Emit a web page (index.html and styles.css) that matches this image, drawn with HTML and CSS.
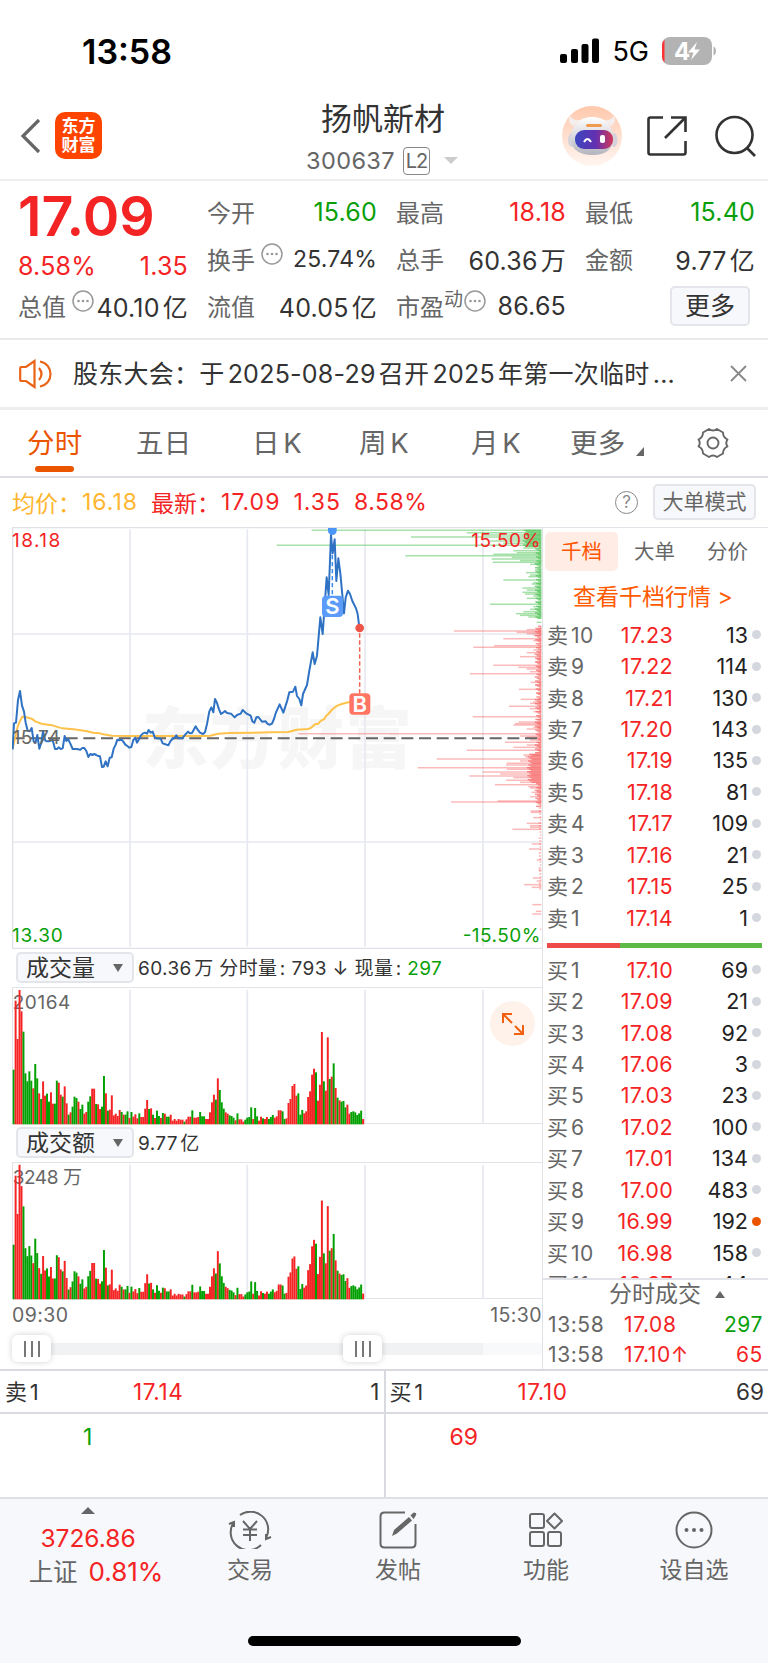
FILE: index.html
```
<!DOCTYPE html>
<html lang="zh-CN">
<head>
    <meta charset="UTF-8">
    <meta name="viewport" content="width=device-width, initial-scale=1.0">
    <title>扬帆新材 300637</title>
    <link rel="stylesheet" href="styles.css">
</head>
<body>
    <div class="status-bar">
        <span class="clock">13:58</span>
        <svg class="signal" width="40" height="26" viewBox="0 0 40 26">
            <rect x="0" y="16" width="7" height="9" rx="2"/>
            <rect x="11" y="11" width="7" height="14" rx="2"/>
            <rect x="21.500" y="6" width="7" height="19" rx="2"/>
            <rect x="32" y="0.500" width="7" height="24.500" rx="2"/>
        </svg>
        <span class="network">5G</span>
        <svg class="battery" width="54" height="28" viewBox="0 0 54 28">
            <rect x="0" y="0" width="50" height="28" rx="8" fill="#b3b3b3"/>
            <path d="M2.500 2.500Q0 5 0 8v12q0 3 2.500 5.500z" fill="#f33"/>
            <path d="M51.500 9.500q2.500 1 2.500 4.500t-2.500 4.500z" fill="#b3b3b3"/>
            <text x="12" y="22.500" class="battery-text">4</text>
            <path d="M35 5L26 15.500h5.500L29 23l9-10.500h-5.500z" fill="#fff"/>
        </svg>
    </div>

    <div class="header">
        <div class="header-left">
            <svg width="21" height="36" viewBox="0 0 21 36"><path d="M19 2L3 18l16 16" fill="none" stroke="#666" stroke-width="3.200"/></svg>
            <div class="logo"><span>东方</span><span>财富</span></div>
        </div>
        <div class="header-title">
            <div class="stock-name">扬帆新材</div>
            <div class="stock-code"><span>300637</span><span class="level">L2</span><i class="caret"></i></div>
        </div>
        <div class="header-right">
            <svg class="robot" width="60" height="60" viewBox="0 0 60 60">
                <defs>
                    <linearGradient id="halo" x1="0" y1="0" x2="0" y2="1"><stop offset="0" stop-color="#ffc8ac"/><stop offset="1" stop-color="#fff6f1"/></linearGradient>
                    <linearGradient id="shell" x1="0" y1="0" x2="0" y2="1"><stop offset="0" stop-color="#fff"/><stop offset="1" stop-color="#b4b4bf"/></linearGradient>
                    <linearGradient id="visor" x1="0" y1="0" x2="1" y2="0"><stop offset="0" stop-color="#3c46c0"/><stop offset=".55" stop-color="#6330b0"/><stop offset="1" stop-color="#d23858"/></linearGradient>
                </defs>
                <circle cx="30" cy="30" r="30" fill="url(#halo)"/>
                <path d="M11 20Q5 16 8 10Q11 15 18 14z M49 20Q55 16 52 10Q49 15 42 14z" fill="#f4eeee"/>
                <ellipse cx="10" cy="34" rx="4" ry="7" fill="#d5d2db"/>
                <ellipse cx="52" cy="34" rx="3.500" ry="7" fill="#d5d2db"/>
                <path d="M30 11C44 11 51 20 51 32C51 44 43 49 31 49C18 49 9 44 9 32C9 20 17 11 30 11z" fill="url(#shell)"/>
                <rect x="13" y="24" width="38" height="19" rx="9" fill="url(#visor)"/>
                <path d="M22 36q3.500-6 7 0" fill="none" stroke="#fff" stroke-width="2"/>
                <rect x="38" y="29" width="5" height="8" rx="2" fill="#fff"/>
                <rect x="24" y="18" width="16" height="3" rx="1.500" fill="#f09a4d"/>
            </svg>
            <svg width="40" height="40" viewBox="0 0 40 40"><path d="M16 1.500H3.500q-2 0-2 2v33q0 2 2 2h33q2 0 2-2V25M24 1.500h14.500V16M38 2L18 22" fill="none" stroke="#333" stroke-width="2.600"/></svg>
            <svg width="42" height="42" viewBox="0 0 42 42"><g fill="none" stroke="#333" stroke-width="2.600"><circle cx="19.500" cy="20" r="18"/><path d="M32 33l8 8"/></g></svg>
        </div>
    </div>

    <div class="quote">
        <div class="quote-col first">
            <div class="price">17.09</div>
            <div class="cell change"><span>8.58%</span><span>1.35</span></div>
            <div class="cell"><label>总值</label><svg class="info"><use href="#dots"/></svg><b>40.10亿</b></div>
        </div>
        <div class="quote-col">
            <div class="cell"><label>今开</label><b class="down">15.60</b></div>
            <div class="cell"><label>换手</label><svg class="info"><use href="#dots"/></svg><b class="small">25.74%</b></div>
            <div class="cell"><label>流值</label><b>40.05亿</b></div>
        </div>
        <div class="quote-col">
            <div class="cell"><label>最高</label><b class="up">18.18</b></div>
            <div class="cell"><label>总手</label><b>60.36万</b></div>
            <div class="cell"><label>市盈<sup>动</sup></label><svg class="info tight"><use href="#dots"/></svg><b>86.65</b></div>
        </div>
        <div class="quote-col">
            <div class="cell"><label>最低</label><b class="down">15.40</b></div>
            <div class="cell"><label>金额</label><b>9.77亿</b></div>
            <div class="cell"><button class="more-btn">更多</button></div>
        </div>
    </div>

    <div class="notice">
        <svg width="34" height="30" viewBox="0 0 34 30"><g fill="none" stroke="#eb6316" stroke-width="2.200"><path d="M2 8h5L15.500 2v26L7 22H2Q1.200 22 1.200 20V10Q1.200 8 2 8z"/><path d="M20 9q5 6 0 12M21 2.500C35 5 35 25 21 27.500"/></g></svg>
        <span class="notice-text">股东大会：于2025-08-29召开2025年第一次临时...</span>
        <svg width="17" height="17" viewBox="0 0 17 17"><path d="M1 1l15 15M16 1L1 16" stroke="#888" stroke-width="1.800"/></svg>
    </div>

    <div class="tabs">
        <span class="tab active">分时</span>
        <span class="tab">五日</span>
        <span class="tab">日K</span>
        <span class="tab">周K</span>
        <span class="tab">月K</span>
        <span class="tab">更多<i class="corner"></i></span>
        <svg class="gear" width="32" height="32" viewBox="0 0 32 32"><g fill="none" stroke="#666" stroke-width="1.900"><path d="M12 2Q16 5 20 2L26 5.500Q26 10.500 30.500 12.500Q28 16 30.500 19.500Q26 21.500 26 26.500L20 30Q16 27 12 30L6 26.500Q6 21.500 1.500 19.500Q4 16 1.500 12.500Q6 10.500 6 5.500z" stroke-linejoin="round"/><circle cx="16" cy="16" r="5.500"/></g></svg>
    </div>

    <div class="summary">
        <span class="avg">均价：</span><span class="avg n1">16.18</span>
        <span class="up">最新：</span><span class="up n2">17.09</span><span class="up n3">1.35</span><span class="up n4">8.58%</span>
        <span class="help">?</span>
        <button class="mode-btn">大单模式</button>
    </div>

    <div class="main">
        <div class="charts">
            <svg class="trend" viewBox="36 21 1590 1266">
                <text class="watermark" x="426" y="728" textLength="810">东方财富</text>
                <path class="grid" d="M390 28V1280M742 28V1280M1095 28V1280M1449 28V1280M38 342H1626M38 966H1626"/>
                <path class="frame" d="M1626 23H38V1285H1626"/>
                <g id="depth"></g>
                <path class="base" d="M38 655H1618"/>
                <polyline class="avg-line" points="38,685 46,650 53,620 60,603 67,590 76,591 95,596 107,605 127,612 157,616 187,625 220,628 258,633 280,638 300,640 310,643 335,647 400,648 500,648 610,648 630,647 655,641 690,639 760,638 810,637 865,636 890,629 925,627 935,622 945,613 955,611 963,602 973,597 978,588 985,582 998,567 1012,557 1025,552 1045,547 1080,542"/>
                <polyline class="price-line" points="38,688 42,610 48,608 54,540 60,513 66,557 72,575 77,608 83,632 89,634 95,624 101,665 107,667 112,645 118,686 124,668 129,634 136,662 141,664 147,664 153,662 158,660 165,687 171,687 176,682 182,687 188,685 194,648 199,663 205,658 212,673 218,687 230,687 241,689 247,684 253,684 259,693 265,711 271,702 277,705 283,702 289,705 294,708 300,709 306,741 311,740 317,724 323,739 329,713 335,712 341,686 347,674 352,659 359,661 365,659 370,665 376,674 382,678 388,683 394,681 400,660 406,653 411,668 417,658 423,646 429,640 435,638 441,641 446,630 452,638 458,635 464,652 470,655 482,656 488,670 494,672 505,676 511,664 517,657 523,654 529,646 535,655 547,655 553,647 564,635 570,640 576,639 587,619 593,629 600,638 609,642 615,637 621,612 628,574 634,562 640,577 645,537 651,549 657,568 663,582 669,578 675,573 681,579 693,581 704,592 711,585 722,581 728,570 740,581 752,587 757,604 763,608 769,592 775,591 786,605 797,604 803,612 810,614 816,611 822,597 828,577 839,553 850,578 862,541 868,517 879,515 886,500 891,528 898,537 904,556 909,522 921,495 928,452 938,397 944,432 951,407 961,292 968,342 980,172 986,225 993,45 998,100 1004,58 1009,183 1015,115 1021,160 1027,225 1032,280 1037,233 1044,212 1050,222 1057,243 1068,265 1073,282 1078,322"/>
                <path d="M997 105V240" stroke="#3b8bf5" stroke-width="4.500" stroke-dasharray="13 8"/>
                <path d="M1079 340V520" stroke="#f0604f" stroke-width="4.500" stroke-dasharray="13 8"/>
                <path d="M984 24h26v8a13 13 0 0 1-26 0z" fill="#4b94f8"/>
                <circle cx="1079" cy="324" r="13" fill="#ef5448"/>
                <rect x="966" y="227" width="63" height="64" rx="12" fill="#5b9cfb"/>
                <rect x="1048" y="520" width="63" height="64" rx="12" fill="#ff7563"/>
                <text class="flag" x="997" y="282">S</text>
                <text class="flag" x="1079" y="575">B</text>
                <text class="axis up" x="36" y="81" textLength="145">18.18</text>
                <text class="axis" x="38" y="672" textLength="143">15.74</text>
                <text class="axis down" x="36" y="1265" textLength="152">13.30</text>
                <text class="axis up" x="1414" y="81" textLength="207">15.50%</text>
                <text class="axis down" x="1388" y="1265" textLength="233">-15.50%</text>
            </svg>
            <div class="sub-head">
                <button class="select">成交量<i></i></button>
                <span>60.36万 分时量: 793 ↓ 现量: <em class="down">297</em></span>
            </div>
            <div class="sub-chart">
                <svg viewBox="36 126 1590 414">
                    <path class="grid" d="M390 134V538M742 134V538M1095 134V538M1449 134V538"/>
                    <text class="axis" x="38" y="192" textLength="173">20164</text>
                    <g id="volume"></g>
                </svg>
                <span class="expand"><svg width="22" height="22" viewBox="0 0 22 22"><path d="M10 1H1v9M1 1l9 9M12 21h9v-9M21 21l-8-8" fill="none" stroke="#f06010" stroke-width="2"/></svg></span>
            </div>
            <div class="sub-head">
                <button class="select">成交额<i></i></button>
                <span>9.77亿</span>
            </div>
            <div class="sub-chart">
                <svg viewBox="36 126 1590 414">
                    <path class="grid" d="M390 134V538M742 134V538M1095 134V538M1449 134V538"/>
                    <text class="axis" x="38" y="192" textLength="208">3248 万</text>
                    <g id="amount"></g>
                </svg>
            </div>
            <div class="times"><span>09:30</span><span>15:30</span></div>
            <div class="slider">
                <span class="handle start"><i></i><i></i><i></i></span>
                <span class="handle end"><i></i><i></i><i></i></span>
            </div>
        </div>

        <div class="book">
            <div class="book-tabs"><span class="active">千档</span><span>大单</span><span>分价</span></div>
            <div class="book-link">查看千档行情 &gt;</div>
            <div class="levels" id="sell"></div>
            <div class="ratio"></div>
            <div class="levels buy" id="buy"></div>
            <div class="deals">
                <div class="deals-title">分时成交<i></i></div>
                <div class="deal"><span>13:58</span><span class="up">17.08</span><span class="down">297</span></div>
                <div class="deal"><span>13:58</span><span class="up">17.10↑</span><span class="up">65</span></div>
            </div>
        </div>
    </div>

    <div class="queue">
        <div class="side">
            <div class="side-head"><span>卖1</span><span class="up">17.14</span><span>1</span></div>
            <div class="side-body down">1</div>
        </div>
        <div class="side">
            <div class="side-head"><span>买1</span><span class="up">17.10</span><span>69</span></div>
            <div class="side-body up">69</div>
        </div>
    </div>

    <div class="bottom">
        <div class="nav">
            <div class="index">
                <i></i>
                <span class="up">3726.86</span>
                <span>上证 <em class="up">0.81%</em></span>
            </div>
            <div class="nav-item">
                <svg width="44" height="38" viewBox="0 0 44 38"><g fill="none" stroke="#666" stroke-width="2"><path d="M12 4A17.800 17.800 0 0 1 38 27M33 34A17.800 17.800 0 0 1 6 11M1 13l5-2v5M43 26l-5 2v-5M15 10l7 8 7-8M22 18v12M15 18.500h14M15 24h14"/></g></svg>
                <span>交易</span>
            </div>
            <div class="nav-item">
                <svg width="38" height="38" viewBox="0 0 38 38"><path d="M26 1.500H5.500q-4 0-4 4v27q0 4 4 4h27q4 0 4-4V13" fill="none" stroke="#666" stroke-width="2"/><path d="M13 25l2-6L30 6l3 3.500L18 22.500zM31.500 4.500L34 2q1-1 2.500 0t0 3L34.500 8z" fill="#666"/></svg>
                <span>发帖</span>
            </div>
            <div class="nav-item">
                <svg width="36" height="38" viewBox="0 0 36 38"><g fill="none" stroke="#666" stroke-width="2"><rect x="2" y="3" width="14" height="14" rx="2"/><path d="M26.500 2.500L34 10l-7.500 7.500L19 10z" stroke-linejoin="round"/><rect x="2" y="21" width="14" height="14" rx="2"/><rect x="20" y="21" width="13" height="14" rx="2"/></g></svg>
                <span>功能</span>
            </div>
            <div class="nav-item">
                <svg width="38" height="38" viewBox="0 0 38 38"><circle cx="19" cy="19" r="17.500" fill="none" stroke="#666" stroke-width="2"/><g fill="#666"><circle cx="11.500" cy="19" r="2"/><circle cx="19" cy="19" r="2"/><circle cx="26.500" cy="19" r="2"/></g></svg>
                <span>设自选</span>
            </div>
        </div>
        <div class="home-bar"></div>
    </div>

    <svg class="defs">
        <symbol id="dots" viewBox="0 0 22 22"><circle cx="11" cy="11" r="10" fill="none" stroke="#999" stroke-width="1.500"/><g fill="#999"><circle cx="6.500" cy="11" r="1.300"/><circle cx="11" cy="11" r="1.300"/><circle cx="15.500" cy="11" r="1.300"/></g></symbol>
    </svg>
    <script src="script.js"></script>
</body>
</html>
```
FILE: styles.css
```
body {
    margin: 0;
    width: 768px;
    background: #fff;
    color: #333;
    font-family: Inter, "Noto Sans CJK SC", sans-serif;
    font-size: 24px;
    text-autospace: normal;
}
button {
    font-family: inherit;
    padding: 0;
    background: #f7f8fb;
    border: 2px solid #e3e5ea;
    border-radius: 5px;
    box-sizing: border-box;
}
svg {
    flex: none;
}
b, em, i {
    font-weight: normal;
    font-style: normal;
}
.up {
    color: #f42424;
    fill: #f42424;
}
.down {
    color: #0a9f0a;
    fill: #0a9f0a;
}
.defs {
    display: none;
}

/* status bar */
.status-bar {
    height: 102px;
    box-sizing: border-box;
    padding: 0 52px 0 82px;
    display: flex;
    align-items: center;
    color: #000;
}
.clock {
    font-size: 34px;
    font-weight: 600;
    margin-right: auto;
}
.network {
    font-size: 27px;
    margin: 0 13px 0 12px;
}
.battery-text {
    font-size: 24px;
    font-weight: 700;
    fill: #fff;
}

/* header */
.header {
    height: 77px;
    display: grid;
    grid-template-columns: 1fr 1fr 1fr;
    border-bottom: 2px solid #eee;
    box-sizing: content-box;
}
.header-left {
    display: flex;
    align-items: center;
    gap: 14px;
    padding: 0 0 10px 20px;
}
.logo {
    width: 47px;
    height: 47px;
    border-radius: 10px;
    background: #ff4400;
    color: #fff;
    font-size: 17px;
    line-height: 19px;
    font-weight: 700;
    display: flex;
    flex-direction: column;
    align-items: center;
    justify-content: center;
}
.header-title {
    text-align: center;
}
.stock-name {
    font-size: 31px;
    line-height: 34px;
    margin-right: 2px;
}
.stock-code {
    display: flex;
    align-items: center;
    justify-content: center;
    color: #666;
    font-size: 23.5px;
    letter-spacing: 0.4px;
    margin: 9px 4px 0 0;
    height: 31px;
}
.level {
    font-size: 20px;
    line-height: 26px;
    width: 25px;
    text-align: center;
    border: 1.5px solid #888;
    border-radius: 4px;
    letter-spacing: -1px;
    margin: 0 14px 0 8px;
}
.caret {
    border: 7px solid transparent;
    border-top: 7px solid #ccc;
    border-bottom: 0;
}
.header-right {
    display: flex;
    align-items: center;
    justify-content: flex-end;
    padding: 0 11px 9px 0;
}
.robot {
    margin-right: 25px;
}
.header-right svg:last-child {
    margin-left: 28px;
}

/* quote */
.quote {
    display: grid;
    grid-template-columns: 170px 170px 170px 170px;
    gap: 19px;
    padding: 7px 0 9px 18px;
    border-bottom: 2px solid #eaeaea;
}
.cell {
    height: 47px;
    display: flex;
    align-items: center;
}
.cell label {
    color: #666;
    white-space: nowrap;
}
.cell b {
    margin-left: auto;
    font-size: 25px;
    letter-spacing: 0.2px;
    white-space: nowrap;
}
.cell b.small {
    font-size: 23px;
}
.price {
    height: 47px;
    line-height: 56px;
    font-size: 55.5px;
    font-weight: 600;
    color: #f42424;
}
.change {
    justify-content: space-between;
    color: #f42424;
    font-size: 25px;
    letter-spacing: 0.2px;
    box-sizing: border-box;
    padding-top: 15px;
}
.info {
    width: 22px;
    height: 22px;
    margin: 0 -20px 9px 6px;
}
.info.tight {
    margin-left: 1px;
}
.cell sup {
    font-size: 19px;
    line-height: 0;
    vertical-align: 10px;
}
.more-btn {
    width: 80px;
    height: 40px;
    margin: 0 5px 0 auto;
    font-size: 25px;
    line-height: 34px;
    color: #333;
}

/* notice */
.notice {
    height: 67px;
    display: flex;
    align-items: center;
    padding: 0 21px 0 19px;
    border-bottom: 3px solid #eee;
}
.notice-text {
    font-size: 25px;
    letter-spacing: 0.25px;
    margin: 0 auto 4px 20px;
    white-space: nowrap;
}

/* tabs */
.tabs {
    height: 66px;
    display: grid;
    grid-template-columns: 109px 116px 107px 112px 99px 127px 32px;
    align-items: center;
    padding-left: 27px;
    border-bottom: 2px solid #dedfe5;
    font-size: 27.5px;
    letter-spacing: 0.3px;
    color: #666;
}
.tab {
    position: relative;
    line-height: 66px;
}
.tab.active {
    color: #eb5500;
}
.tab.active::after {
    content: "";
    position: absolute;
    left: 8px;
    bottom: 4px;
    width: 39px;
    height: 6px;
    border-radius: 3px;
    background: #eb5500;
}
.corner {
    display: inline-block;
    border-left: 8px solid transparent;
    border-bottom: 9px solid #666;
    margin: 0 0 -3px 10px;
}

/* summary line */
.summary {
    height: 49px;
    box-sizing: border-box;
    padding: 0 12px 1px;
    display: flex;
    align-items: center;
    font-size: 23px;
    white-space: nowrap;
}
.avg {
    color: #ffb62e;
}
.n1, .n2, .n3, .n4 {
    letter-spacing: 1px;
    margin-left: 1px;
}
.n1 {
    margin-right: 13px;
}
.n3, .n4 {
    margin-left: 13px;
}
.n4 {
    letter-spacing: 0.5px;
}
.help {
    width: 21px;
    height: 21px;
    line-height: 21px;
    margin-left: auto;
    border: 1.5px solid #888;
    border-radius: 50%;
    text-align: center;
    font-size: 17px;
    color: #888;
}
.mode-btn {
    width: 103px;
    height: 36px;
    margin-left: 15px;
    font-size: 21px;
    line-height: 30px;
    color: #666;
}

/* charts */
.main {
    display: flex;
    height: 842px;
    margin-left: 12px;
}
.charts {
    width: 531px;
    flex: none;
    border-right: 1px solid #dfe1e7;
    box-sizing: border-box;
}
.trend {
    display: block;
    width: 530px;
    height: 422px;
}
.grid {
    fill: none;
    stroke: #e6e9f0;
    stroke-width: 5;
}
.frame {
    fill: none;
    stroke: #dfe1e7;
    stroke-width: 4;
}
.base {
    stroke: #666;
    stroke-width: 6;
    stroke-dasharray: 36 17;
}
.avg-line, .price-line {
    fill: none;
    stroke: #ffc24b;
    stroke-width: 6;
    stroke-linejoin: round;
}
.price-line {
    stroke: #2f72c4;
}
.watermark {
    font-size: 200px;
    font-weight: 900;
    fill: #f6f6f6;
}
.flag {
    font-size: 66px;
    font-weight: 600;
    fill: #fff;
    text-anchor: middle;
}
.axis {
    font-size: 57px;
    fill: #666;
}
.axis.up {
    fill: #f42424;
}
.axis.down {
    fill: #0a9f0a;
}
.sub-head {
    height: 38px;
    box-sizing: border-box;
    display: flex;
    align-items: center;
    padding: 0 0 1px 4px;
    font-size: 19px;
    letter-spacing: 0.4px;
    white-space: pre;
}
.sub-head > span {
    margin-bottom: 2px;
}
.select {
    width: 118px;
    height: 31px;
    margin-right: 4px;
    display: flex;
    align-items: center;
    justify-content: space-between;
    padding: 0 9px 0 8px;
    font-size: 23px;
    line-height: 26px;
    color: #333;
}
.select i {
    border: 5px solid transparent;
    border-top: 8px solid #666;
    border-bottom: 0;
}
.sub-chart {
    position: relative;
    height: 137px;
    box-sizing: border-box;
    border: 1px solid #e1e3e9;
    border-right: 0;
}
.sub-chart > svg {
    display: block;
    width: 530px;
    height: 138px;
    margin: -1px;
}
.expand {
    position: absolute;
    right: 7px;
    top: 13px;
    width: 45px;
    height: 45px;
    border-radius: 50%;
    background: #fff2eb;
    display: flex;
    align-items: center;
    justify-content: center;
}
.times {
    height: 31px;
    display: flex;
    align-items: center;
    justify-content: space-between;
    font-size: 19.5px;
    letter-spacing: 0.4px;
    color: #666;
}
.slider {
    position: relative;
    height: 12px;
    margin-top: 13px;
    border-radius: 4px;
    background: linear-gradient(90deg, #f1f2f4 471px, #f8f9fb 471px);
}
.handle {
    position: absolute;
    top: -8px;
    width: 39px;
    height: 27px;
    border-radius: 6px;
    background: #fff;
    box-shadow: 0 0 6px rgba(0,0,0,0.18);
    display: flex;
    align-items: center;
    justify-content: center;
    gap: 5px;
}
.handle i {
    width: 2px;
    height: 16px;
    background: #777;
}
.handle.start {
    left: 0;
}
.handle.end {
    left: 331px;
}

/* order book */
.book {
    width: 225px;
    display: flex;
    flex-direction: column;
    border-top: 1px solid #e1e3e9;
    box-sizing: border-box;
}
.book-tabs {
    display: flex;
    padding: 4px 0 0 2px;
    font-size: 20.5px;
    color: #666;
    flex: none;
}
.book-tabs span {
    width: 73px;
    line-height: 39px;
    text-align: center;
    border-radius: 5px;
}
.book-tabs .active {
    background: #ffede5;
    color: #ff5500;
}
.book-link {
    height: 48px;
    line-height: 52px;
    flex: none;
    font-size: 23px;
    color: #ff5a00;
    padding-left: 30px;
}
.levels {
    flex: none;
    height: 315px;
}
.level-row {
    height: 31.45px;
    display: flex;
    align-items: center;
    padding-left: 4px;
    font-size: 21.5px;
    color: #666;
}
.level-row span:nth-child(1) {
    width: 52px;
    white-space: nowrap;
    font-size: 21px;
    letter-spacing: 0.4px;
    margin-bottom: 2px;
}
.level-row span:nth-child(2) {
    width: 74px;
    text-align: right;
    letter-spacing: 0.3px;
}
.level-row span:nth-child(3) {
    width: 75px;
    text-align: right;
    color: #222;
}
.level-row i {
    width: 9px;
    height: 9px;
    margin-left: 4px;
    border-radius: 50%;
    background: #d4d7de;
}
.level-row i.mine {
    background: #eb5500;
}
.ratio {
    flex: none;
    width: 215px;
    height: 5px;
    margin: 9px 0 6px 4px;
    background: linear-gradient(90deg, #ef4a4a 73px, #5cba47 73px);
}
.levels.buy {
    height: 324px;
    overflow: hidden;
}
.deals {
    flex: 1;
    border-top: 2px solid #e1e3e9;
    color: #666;
}
.deals-title {
    height: 30px;
    line-height: 28px;
    font-size: 23px;
    padding-left: 66px;
}
.deals-title i {
    display: inline-block;
    border: 5px solid transparent;
    border-bottom: 7px solid #666;
    border-top: 0;
    margin: 0 0 4px 14px;
}
.deal {
    height: 29.5px;
    display: flex;
    align-items: center;
    padding: 0 5px 0 5px;
    font-size: 21px;
    letter-spacing: 0.6px;
}
.deal span:nth-child(1) {
    width: 76px;
}
.deal span:nth-child(3) {
    margin-left: auto;
}

/* best bid / ask */
.queue {
    display: flex;
    border-top: 2px solid #d9dae0;
    border-bottom: 2px solid #dedfe3;
    height: 126px;
}
.side {
    flex: 1;
}
.side:first-child {
    border-right: 2px solid #d9dae0;
    margin-right: -1px;
}
.side-head {
    height: 41px;
    display: grid;
    grid-template-columns: 128px 1fr auto;
    align-items: center;
    padding: 0 4px 0 5px;
    border-bottom: 2px solid #d9dae0;
    font-size: 22.5px;
}
.side-head span:first-child {
    font-size: 22px;
    margin-bottom: 3px;
}
.side-head .up {
    letter-spacing: 0.6px;
}
.side-body {
    padding: 9px 0 0 83px;
    font-size: 23px;
}
.side + .side .side-body {
    padding-left: 65px;
}

/* bottom nav */
.bottom {
    height: 164px;
    background: #f7f8fb;
    color: #666;
    overflow: hidden;
}
.nav {
    display: grid;
    grid-template-columns: 176px 148px 148px 148px 148px;
    height: 137px;
}
.index, .nav-item {
    display: flex;
    flex-direction: column;
    align-items: center;
    font-size: 23px;
}
.index i {
    border: 7px solid transparent;
    border-bottom: 7px solid #666;
    border-top: 0;
    margin: 8px 0 7px;
}
.index span {
    height: 34px;
    line-height: 34px;
    font-size: 24.5px;
    white-space: pre;
    padding-left: 16px;
}
.index span:nth-child(2) {
    padding-left: 0;
}
.index em {
    font-size: 26px;
    margin-left: 4px;
}
.nav-item svg {
    margin: 12px 0 4px;
}
.nav-item span {
    line-height: 34px;
}
.home-bar {
    width: 273px;
    height: 10px;
    border-radius: 5px;
    background: #000;
    margin: 0 auto;
}
```
FILE: script.js
```
const RED = "#f42424";
const GREEN = "#00a000";

// one entry per minute from 09:30, bar height + direction
const minutes = `164g 371r 256r 403r 339r 278g 153g 129g 159g 131g 108r 181g 138g 93r 76g 129r 86r 92g 68g 96r
62r 62g 131g 125r 89r 83g 114r 63r 29g 36r 53g 83g 79g 68r 46g 59g 32r 37r 68g 84g
107r 107r 61g 60r 46r 53g 145g 93r 41g 44r 87r 27r 32r 25r 43r 37g 29r 29g 39g 19r
37g 23r 30r 18r 33g 22r 22r 47r 73r 46g 48r 29g 19r 41g 25g 19r 34g 32r 23g 23g
29r 11r 16r 11r 16r 14r 14r 8g 15r 23r 23r 42g 20r 20r 22r 37g 24g 24g 16r 16r
36r 66r 89r 74g 138r 103g 66g 47g 36r 32r 27g 25g 20g 12r 33g 15r 15r 8r 14g 20g
22g 51g 16r 49g 24g 11r 23r 18g 16r 22r 16g 22g 28g 20r 24r 42r 42r 39g 16g 18r
64r 76r 115r 121r 86r 93g 29g 43g 33r 39r 82r 99r 149r 167r 156g 71r 119r 277r 129g 101r
261r 136g 143r 183g 109r 80g 72r 68g 70g 51g 59r 32r 37g 39g 36g 28g 33g 41g 16r`.split(/\s+/);

function drawBars(id, growth) {
    let out = "";
    minutes.forEach((m, i) => {
        const h = parseInt(m) * (1 + growth * i / minutes.length);
        const x = 38 + i * 5.89;
        out += `<rect x="${x}" y="${538 - h}" width="5.9" height="${h}" fill="${m.endsWith("g") ? GREEN : RED}"/>`;
    });
    document.getElementById(id).innerHTML = out;
}

// price distribution on the right edge of the chart: [y, left]
const greenDepth = [[31,125],[38,590],[45,640],[51,423],[57,700],[63,660],[70,700],[76,20],[84,760],[92,730],[98,740],[103,670],[107,406],[112,725],[117,665],[122,750],[127,668],[133,780],[150,795],[158,768],[165,780],[170,775],[180,700],[188,790],[192,785],[204,757],[210,770],[217,757],[222,765],[228,790],[235,770],[246,795],[253,660],[260,790],[268,780],[275,760],[281,738],[286,750],[291,775],[307,800]];
const redDepth = [[325,795],[329,770],[333,552],[337,740],[341,770],[346,790],[356,700],[362,790],[377,672],[382,610],[390,790],[398,770],[410,750],[417,800],[425,795],[436,670],[442,745],[447,770],[455,780],[461,600],[487,782],[495,795],[508,747],[520,800],[538,752],[546,790],[550,780],[559,717],[566,780],[575,790],[590,608],[598,795],[606,745],[611,735],[615,730],[622,790],[627,770],[641,85],[648,750],[652,770],[660,780],[667,705],[675,770],[682,730],[691,590],[698,795],[705,760],[710,765],[717,500],[723,750],[730,710],[735,708],[743,443],[748,710],[756,638],[762,690],[768,598],[773,730],[781,708],[787,750],[794,675],[800,775],[804,780],[817,785],[830,780],[843,683],[846,543],[873,782],[877,782],[893,790],[910,770],[917,780],[922,780],[928,727],[972,785],[987,777],[1020,800],[1050,805],[1074,788],[1083,800],[1094,762],[1102,785],[1154,787],[1174,798],[1182,787],[1228,810]];

function drawDepth() {
    const right = 1624;
    const bar = (y, left, color) => `<path d="M${left + 810} ${y}H${right}" stroke="${color}" stroke-width="4.5"/>`;
    let out = "";
    for (let y = 31; y < 860; y += 4) {
        if (y > 295 && y < 318) continue;
        let len = 4 + (y * 7) % 17;
        if (y < 82) len += 36;
        if (y > 700 && y < 790) len += 24;
        out += bar(y, 814 - len, y < 300 ? "#7fd183" : "#f99494");
    }
    for (let y = 864; y < 1110; y += 9) {
        out += bar(y, 810 - y % 5, "#fbb4b4");
    }
    greenDepth.forEach(d => out += bar(d[0], d[1], "rgba(80,195,85,0.5)"));
    redDepth.forEach(d => out += bar(d[0], d[1], "rgba(245,90,90,0.42)"));
    document.getElementById("depth").innerHTML = out;
}

const sell = [["10", "17.23", 13], ["9", "17.22", 114], ["8", "17.21", 130], ["7", "17.20", 143], ["6", "17.19", 135], ["5", "17.18", 81], ["4", "17.17", 109], ["3", "17.16", 21], ["2", "17.15", 25], ["1", "17.14", 1]];
const buy = [["1", "17.10", 69], ["2", "17.09", 21], ["3", "17.08", 92], ["4", "17.06", 3], ["5", "17.03", 23], ["6", "17.02", 100], ["7", "17.01", 134], ["8", "17.00", 483], ["9", "16.99", 192, true], ["10", "16.98", 158], ["11", "16.97", 44]];

function drawLevels(id, name, rows) {
    document.getElementById(id).innerHTML = rows.map(r => `
        <div class="level-row">
            <span>${name}${r[0]}</span>
            <span class="up">${r[1]}</span>
            <span>${r[2]}</span>
            <i class="${r[3] ? "mine" : ""}"></i>
        </div>`).join("");
}

drawBars("volume", 0);
drawBars("amount", 0.08);
drawDepth();
drawLevels("sell", "卖", sell);
drawLevels("buy", "买", buy);
```
